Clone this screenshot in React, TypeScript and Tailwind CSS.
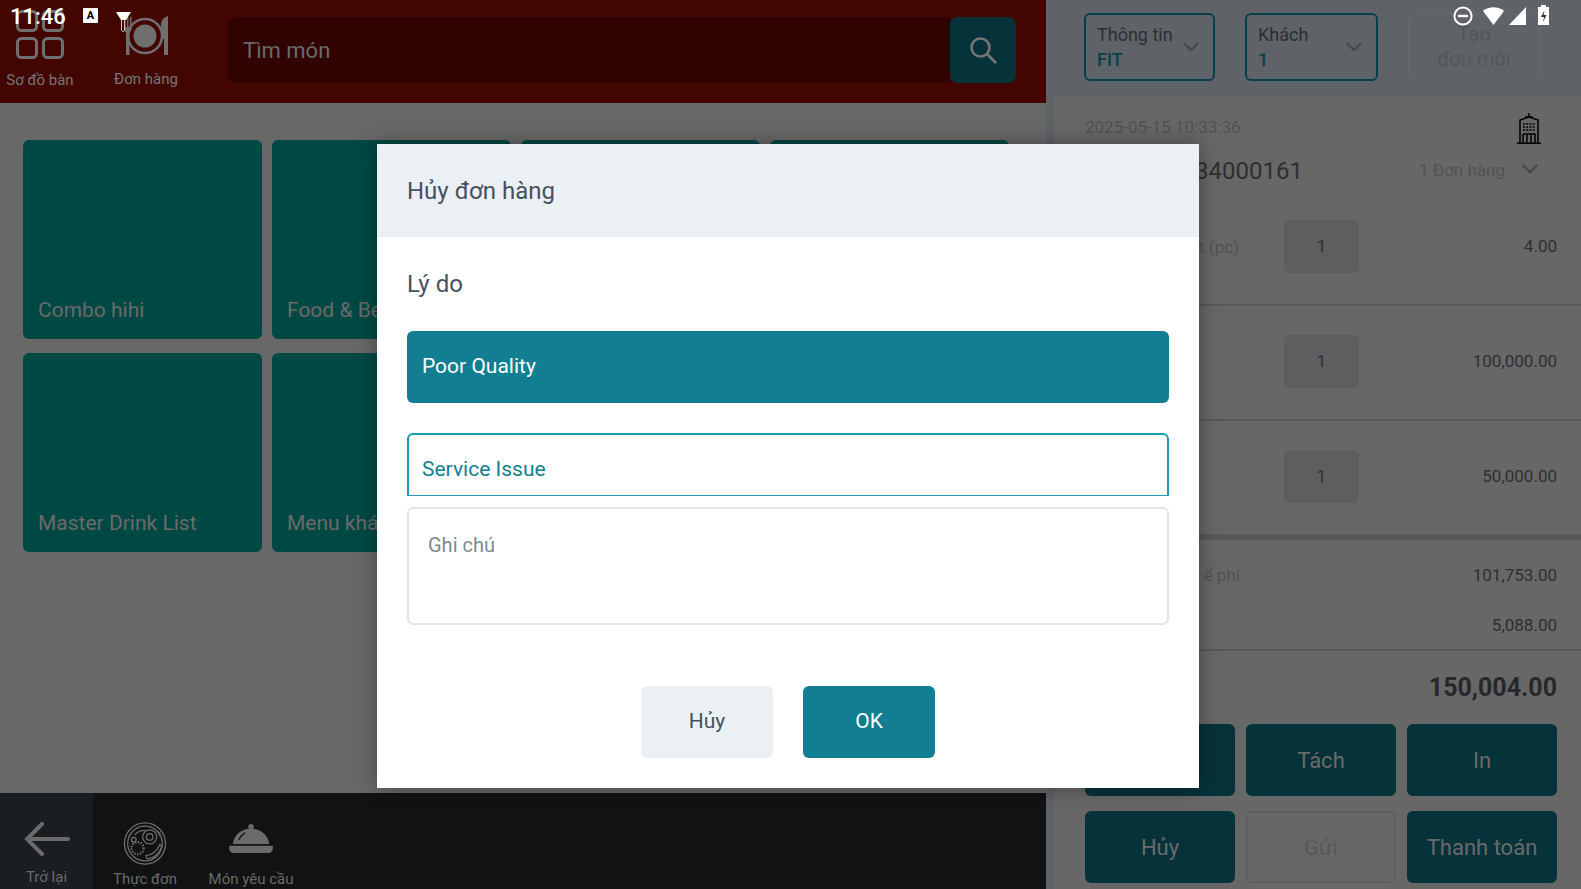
import { ChevronDown } from "lucide-react";

const tiles = ["Combo hihi", "Food & Beverage", "", "", "Master Drink List", "Menu khác"];

const orderRows = [
  { name: "t (pc)", price: "4.00" },
  { name: "", price: "100,000.00" },
  { name: "", price: "50,000.00" },
];

function GridIcon() {
  return (
    <svg width="48" height="50" viewBox="0 0 48 50" fill="none" stroke="#6f6f6f" strokeWidth="3">
      <rect x="1.5" y="1.5" width="19" height="19" rx="4" />
      <rect x="27.5" y="1.5" width="19" height="19" rx="4" />
      <rect x="1.5" y="28.5" width="19" height="19" rx="4" />
      <rect x="27.5" y="28.5" width="19" height="19" rx="4" />
    </svg>
  );
}

function PlateIcon() {
  return (
    <svg width="46" height="42" viewBox="0 0 46 42" fill="#6f6f6f">
      <circle cx="22" cy="21" r="17" fill="none" stroke="#6f6f6f" strokeWidth="2.5" />
      <circle cx="22" cy="21" r="11.5" />
      <path d="M1 2h1.5v10H4V2h1.5v10H7V2h1.5v13l-2 3v22H3V18l-2-3z" />
      <path d="M45 1v39h-4V24h-3V10c0-5 3-8 7-9z" />
    </svg>
  );
}

function BackArrow() {
  return (
    <svg width="46" height="34" viewBox="0 0 46 34" fill="none" stroke="#6b6b6b" strokeWidth="4" strokeLinecap="round">
      <path d="M44 17H3M18 2 3 17l15 15" />
    </svg>
  );
}

function FoodIcon() {
  return (
    <svg width="46" height="46" viewBox="0 0 46 46" fill="none" stroke="#6f6f6f" strokeWidth="1.3">
      <circle cx="23" cy="23" r="22" />
      <circle cx="23" cy="23" r="18.5" />
      <circle cx="28" cy="16" r="7.5" />
      <circle cx="28" cy="16" r="3.5" />
      <path d="M12 14c3-4 8-5 11-5M36 10l3 2-1 3" />
      <circle cx="15" cy="28" r="6.5" strokeDasharray="1.5 1.5" strokeWidth="2.5" />
      <circle cx="11" cy="19" r="2.5" />
      <path d="M24 36c6 0 12-5 15-12l2 2c-2 7-9 14-16 13z" />
    </svg>
  );
}

function ClocheIcon() {
  return (
    <svg width="48" height="33" viewBox="0 0 48 33" fill="#6b6b6b">
      <circle cx="24" cy="3" r="3" />
      <path d="M4 22C5 12 14 5 24 5s19 7 20 17z" />
      <path d="M11 17c1-3 3-5 6-7" fill="none" stroke="#111214" strokeWidth="1.5" strokeLinecap="round" />
      <path d="M0 24h48v3c0 3-2 5-5 5H5c-3 0-5-2-5-5z" />
    </svg>
  );
}

function BuildingIcon() {
  return (
    <svg width="24" height="31" viewBox="0 0 24 31" fill="none" stroke="#000" strokeWidth="1.5">
      <path d="M12 0v4M8 4h8" />
      <path d="M3 30V7l9-3 9 3v23" />
      <path d="M0 30.2h24" />
      <path d="M6 11h12M6 14h12M6 17h12" strokeWidth="1.5" strokeDasharray="2 1.2" />
      <path d="M6 21h12v9M6 21v9M10 21v9M14 21v9" />
    </svg>
  );
}

function StatusBar() {
  return (
    <>
      <span className="absolute left-[10px] top-[3px] text-[22px] leading-[28px] font-medium text-white">11:46</span>
      <span className="absolute left-[83px] top-[8px] flex h-[15px] w-[15px] items-center justify-center rounded-[1px] bg-white text-[11px] font-bold leading-none text-black">
        A
      </span>
      <svg className="absolute left-[115px] top-[11px]" width="17" height="22" viewBox="0 0 17 22">
        <path d="M1 1h15l-5 8H6z" fill="#fff" />
        <path d="M6.5 9v10c0 2 3 2 3 0V9" fill="none" stroke="#ccc" strokeWidth="1" />
      </svg>
      <svg className="absolute left-[1452px] top-[5px]" width="100" height="22" viewBox="0 0 100 22" fill="#fff">
        <circle cx="11" cy="11" r="8.6" fill="none" stroke="#fff" strokeWidth="2" />
        <rect x="6" y="9.8" width="10" height="2.4" />
        <path d="M31 6c6-5 15-5 21 0L41.500 20z" />
        <path d="M74 20 57 20 74 2z" />
        <rect x="86" y="2" width="11" height="18" />
        <rect x="89" y="0" width="5" height="2" />
        <path d="M92.500 5 89 12h3l-1 5 3.500-7h-3z" fill="#333" />
      </svg>
    </>
  );
}

function Picker({ label, value, widthClass }: { label: string; value: string; widthClass: string }) {
  return (
    <div className={`flex h-[68px] items-center justify-between rounded-md border-2 border-[#06404a] pl-[11px] pr-[9px] ${widthClass}`}>
      <div className="text-[18px] leading-[25px] text-[#2d2f33]">
        <div>{label}</div>
        <div className="font-medium text-[#06404a]">{value}</div>
      </div>
      <ChevronDown size={26} strokeWidth={2} className="text-[#44474b]" />
    </div>
  );
}

export default function App() {
  return (
    <div className="relative flex h-[889px] w-[1581px] overflow-hidden bg-[#686868] [font-family:Roboto,sans-serif]">
      {/* left side: menu */}
      <div className="flex h-full w-[1046px] flex-col">
        <div className="flex h-[103px] items-start bg-[#430500] pr-[30px]">
          <div className="ml-0 flex w-[80px] flex-col items-center pt-[10px]">
            <GridIcon />
            <span className="mt-[10px] text-[15px] leading-[20px] text-[#767676]">Sơ đồ bàn</span>
          </div>
          <div className="ml-[26px] flex w-[80px] flex-col items-center pt-[15px]">
            <PlateIcon />
            <span className="mt-[12px] text-[15px] leading-[20px] text-[#767676]">Đơn hàng</span>
          </div>
          <div className="ml-[42px] mt-[17px] flex h-[66px] flex-1 items-center rounded-l-lg bg-[#300300] pl-[15px] text-[22px] text-[#6a6a6a]">
            Tìm món
          </div>
          <div className="mt-[17px] flex h-[66px] w-[66px] items-center justify-center rounded-lg bg-[#06323a]">
            <svg width="28" height="28" viewBox="0 0 28 28" fill="none" stroke="#767676" strokeWidth="2.6">
              <circle cx="11.500" cy="11.500" r="9" />
              <path d="m18 18 9 9" />
            </svg>
          </div>
        </div>

        <div className="flex-1 pl-[23px] pt-[37px]">
          <div className="grid grid-cols-[repeat(4,239px)] grid-rows-[199px_199px] gap-x-[10px] gap-y-[14px]">
            {tiles.map((title, i) => (
              <div key={i} className="flex items-end rounded-md bg-[#004843] pb-[15px] pl-[15px] text-[21px] leading-[28px] text-[#6a6a6a]">
                {title}
              </div>
            ))}
          </div>
        </div>

        <div className="flex h-[96px] bg-[#111214]">
          <div className="flex w-[93px] flex-col items-center bg-[#1a1e23] pt-[29px]">
            <BackArrow />
            <span className="mt-[11px] text-[15px] leading-[20px] text-[#6a6a6a]">Trở lại</span>
          </div>
          <div className="flex w-[104px] flex-col items-center pt-[29px]">
            <FoodIcon />
            <span className="mt-[4px] text-[15px] leading-[20px] text-[#6a6a6a]">Thực đơn</span>
          </div>
          <div className="flex w-[108px] flex-col items-center pt-[31px]">
            <ClocheIcon />
            <span className="mt-[15px] whitespace-nowrap text-[15px] leading-[20px] text-[#6a6a6a]">Món yêu cầu</span>
          </div>
        </div>
      </div>

      {/* right side: current order */}
      <div className="flex h-full flex-1 flex-col bg-[#5f6266]">
        <div className="flex h-[96px] shrink-0 items-start gap-x-[30px] pl-[38px] pt-[13px]">
          <Picker label="Thông tin" value="FIT" widthClass="w-[131px]" />
          <Picker label="Khách" value="1" widthClass="w-[133px]" />
          <div className="flex h-[68px] w-[132px] items-center justify-center rounded-md border-2 border-[#63676b] text-center text-[20px] leading-[25px] text-[#53575b]">
            Tạo
            <br />
            đơn mới
          </div>
        </div>

        <div className="ml-[8px] flex-1 bg-[#676767]">
          <div className="h-[95px] pl-[31px] pr-[24px]">
            <div className="flex h-[60px] items-center justify-between pt-[3px]">
              <span className="text-[17px] text-[#4f5256]">2025-05-15 10:33:36</span>
              <span className="mr-[16px] pt-[1px]">
                <BuildingIcon />
              </span>
            </div>
            <div className="flex h-[30px] items-center justify-between">
              <span className="ml-[110px] text-[24px] text-[#2d2f33]">34000161</span>
              <div className="flex items-center text-[#4f5256]">
                <span className="text-[17px]">1 Đơn hàng</span>
                <ChevronDown size={26} strokeWidth={2} className="ml-[12px] mr-[14px] -translate-y-[2px] text-[#44474b]" />
              </div>
            </div>
          </div>

          {orderRows.map((row, i) => (
            <div key={i} className="flex h-[115px] items-center border-b-2 border-[#585858] pb-[2px] pl-[31px] pr-[24px]">
              <span className="w-[199px] pr-[45px] pt-[3px] text-right text-[17px] text-[#4f5256]">{row.name}</span>
              <span className="flex h-[53px] w-[75px] items-center justify-center rounded-md bg-[#5c5e60] text-[17px] text-[#2d2f33]">1</span>
              <span className="flex-1 text-right text-[17px] text-[#2d2f33]">{row.price}</span>
            </div>
          ))}

          <div className="h-[115px] border-y-[3px] border-t-[4px] border-[#585858] border-b-2 pl-[31px] pr-[24px] pt-[16px] text-[17px] text-[#2d2f33]">
            <div className="flex h-[40px] items-center justify-between">
              <span className="w-[155px] text-right text-[#4f5256]">ế phí</span>
              <span>101,753.00</span>
            </div>
            <div className="mt-[10px] flex h-[40px] items-center justify-end">
              <span>5,088.00</span>
            </div>
          </div>

          <div className="flex h-[73px] items-center justify-end pr-[24px] text-[25px] font-bold text-[#26282c]">150,004.00</div>

          <div className="grid grid-cols-3 grid-rows-[72px_72px] gap-x-[11px] gap-y-[15px] pl-[31px] pr-[24px] text-[22px] text-[#6a6a6a]">
            <div className="rounded-md bg-[#06323a]" />
            <div className="flex items-center justify-center rounded-md bg-[#06323a]">Tách</div>
            <div className="flex items-center justify-center rounded-md bg-[#06323a]">In</div>
            <div className="flex items-center justify-center rounded-md bg-[#06323a]">Hủy</div>
            <div className="flex items-center justify-center rounded-md border-2 border-[#5e5e5e] text-[#585858]">Gửi</div>
            <div className="flex items-center justify-center rounded-md bg-[#06323a]">Thanh toán</div>
          </div>
        </div>
      </div>

      <StatusBar />

      {/* cancel dialog */}
      <div className="absolute left-[377px] top-[144px] h-[644px] w-[822px] bg-white shadow-[0_0_20px_rgba(0,0,0,0.35)]">
        <div className="flex h-[93px] items-center bg-[#ebf0f4] pl-[30px] text-[24px] text-[#46505e]">Hủy đơn hàng</div>
        <div className="px-[30px]">
          <div className="flex h-[94px] items-center text-[24px] text-[#46505e]">Lý do</div>
          <div className="flex h-[72px] items-center rounded-md bg-[#117e92] pl-[15px] text-[21px] text-white">Poor Quality</div>
          <div className="mt-[30px] flex h-[63px] items-center rounded-t-md border-2 border-b border-[#1b9ab3] pl-[13px] pt-[10px] text-[21px] text-[#12808f]">
            Service Issue
          </div>
          <div className="mt-[11px] h-[118px] rounded-md border-2 border-[#e2e6ea] pl-[19px] pt-[22px] text-[20px] leading-[28px] text-[#7e8a92]">
            Ghi chú
          </div>
          <div className="mt-[61px] flex justify-center gap-x-[30px] text-[21px]">
            <div className="flex h-[72px] w-[132px] items-center justify-center rounded-md bg-[#ebf0f4] text-[#46505e]">Hủy</div>
            <div className="flex h-[72px] w-[132px] items-center justify-center rounded-md bg-[#117e92] text-white">OK</div>
          </div>
        </div>
      </div>
    </div>
  );
}
